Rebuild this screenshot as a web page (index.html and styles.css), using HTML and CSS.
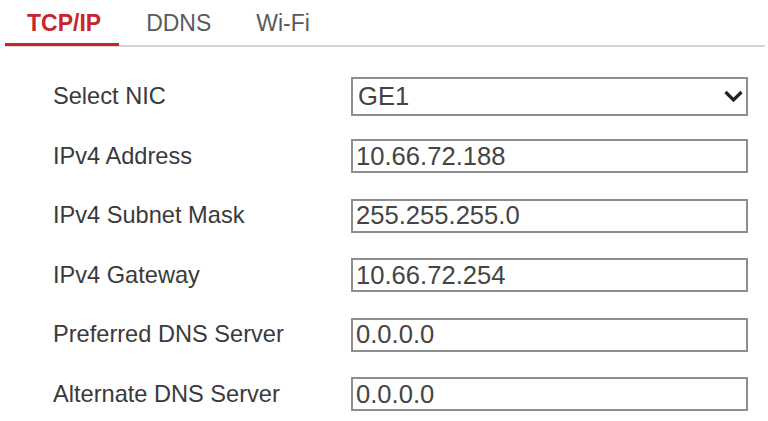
FILE: index.html
```html
<!DOCTYPE html>
<html lang="en">
<head>
    <meta charset="UTF-8">
    <title>Network Settings</title>
    <link rel="stylesheet" href="styles.css">
</head>
<body>
    <div class="tabs">
        <div class="tab active">TCP/IP</div>
        <div class="tab">DDNS</div>
        <div class="tab">Wi-Fi</div>
    </div>

    <div class="form">
        <label class="label">Select NIC</label>
        <div class="select">
            <span>GE1</span>
            <svg width="19" height="13" viewBox="0 0 19 13">
                <path d="M1.5 2 L9.5 10 L17.5 2" fill="none" stroke="#222" stroke-width="3.2"/>
            </svg>
        </div>

        <label class="label">IPv4 Address</label>
        <input class="field" type="text" value="10.66.72.188">

        <label class="label">IPv4 Subnet Mask</label>
        <input class="field" type="text" value="255.255.255.0">

        <label class="label">IPv4 Gateway</label>
        <input class="field" type="text" value="10.66.72.254">

        <label class="label">Preferred DNS Server</label>
        <input class="field" type="text" value="0.0.0.0">

        <label class="label">Alternate DNS Server</label>
        <input class="field" type="text" value="0.0.0.0">
    </div>
</body>
</html>
```

FILE: styles.css
```css
body {
    margin: 0;
    background: #fff;
    font-family: "Liberation Sans", Arial, sans-serif;
    color: #3a3a3a;
}

/* tab strip */
.tabs {
    display: flex;
    gap: 5px;
    margin: 0 3px 0 5px;
    border-bottom: 2px solid #d6d6d6;
}
.tab {
    padding: 10px 18px 7px 22px;
    font-size: 23px;
    line-height: 26px;
    color: #5a5a5a;
    border-bottom: 3px solid transparent;
    margin-bottom: -1px;
}
.tab.active {
    color: #c9252c;
    font-weight: bold;
    border-bottom-color: #c9252c;
}

/* settings rows */
.form {
    display: grid;
    grid-template-columns: 298px 397px;
    grid-auto-rows: 59.5px;
    align-items: center;
    padding: 20px 0 0 53px;
}
.label {
    font-size: 23.6px;
}
.field {
    box-sizing: border-box;
    height: 34px;
    width: 100%;
    margin: 0;
    padding: 0 3px;
    border: 2px solid #8e8e8e;
    font-family: inherit;
    font-size: 25.6px;
    color: #444;
    background: #fff;
    outline: none;
}
.select {
    box-sizing: border-box;
    height: 39px;
    display: flex;
    align-items: center;
    justify-content: space-between;
    padding: 0 3px 0 5px;
    border: 2px solid #8e8e8e;
    font-size: 25.6px;
    color: #444;
}
```
